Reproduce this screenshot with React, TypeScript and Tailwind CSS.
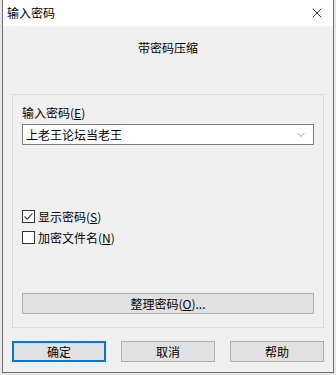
import { ChevronDown, X } from "lucide-react";

const font = { fontFamily: '"Noto Sans CJK SC", "Liberation Sans", sans-serif' };

function Check({ checked, label, accel }: { checked?: boolean; label: string; accel: string }) {
  return (
    <label className="flex h-[21px] items-center gap-[3px] text-[12px] text-black">
      <span className="grid h-[13px] w-[13px] place-items-center border border-[#333] bg-white">
        {checked && (
          <svg width="11" height="11" viewBox="0 0 11 11">
            <path d="M1.5 5.5 L4.2 8.2 L9.5 2.5" fill="none" stroke="#333" strokeWidth="1.1" />
          </svg>
        )}
      </span>
      <span>
        {label}(<span className="underline">{accel}</span>)
      </span>
    </label>
  );
}

function Btn({ children, primary }: { children: React.ReactNode; primary?: boolean }) {
  return (
    <button
      className={
        primary
          ? "h-[21px] w-[94px] border-2 border-[#0078d7] bg-[#e1e1e1] text-[12px] leading-none text-black"
          : "h-[21px] w-[94px] border border-[#adadad] bg-[#e1e1e1] text-[12px] leading-none text-black"
      }
    >
      {children}
    </button>
  );
}

export default function App() {
  return (
    <div className="h-[375px] w-[336px] bg-[#e6e6e6] px-[2px] pb-[2px]" style={font}>
      <div className="flex h-[373px] flex-col border border-t-0 border-[#6f6f6f] bg-[#f0f0f0]">
        <div className="flex h-[26px] items-center justify-between bg-white pl-[4px] pr-[8px]">
          <span className="text-[12px] text-black">输入密码</span>
          <X size={16} strokeWidth={1.2} className="text-black" />
        </div>
        <div className="mt-[13px] h-[18px] text-center text-[12px] leading-[18px] text-black">带密码压缩</div>
        <div className="mx-[9px] mt-[37px] flex h-[234px] flex-col border border-[#dcdcdc] px-[9px]">
          <div className="mt-[9px] h-[18px] text-[12px] leading-[18px] text-black">
            输入密码(<span className="underline">E</span>)
          </div>
          <div className="mt-[2px] flex h-[21px] items-center justify-between border border-[#7a7a7a] bg-white pl-[3px] pr-[6px]">
            <span className="text-[12px] text-black">上老王论坛当老王</span>
            <ChevronDown size={12} strokeWidth={1.3} className="text-[#555]" />
          </div>
          <div className="mt-[61px] flex flex-col">
            <Check checked label="显示密码" accel="S" />
            <Check label="加密文件名" accel="N" />
          </div>
          <button className="mt-[45px] h-[21px] w-full border border-[#adadad] bg-[#e1e1e1] text-[12px] leading-none text-black">
            整理密码(<span className="underline">O</span>)...
          </button>
        </div>
        <div className="mx-[9px] mt-[13px] flex justify-between">
          <Btn primary>确定</Btn>
          <Btn>取消</Btn>
          <Btn>帮助</Btn>
        </div>
      </div>
    </div>
  );
}
